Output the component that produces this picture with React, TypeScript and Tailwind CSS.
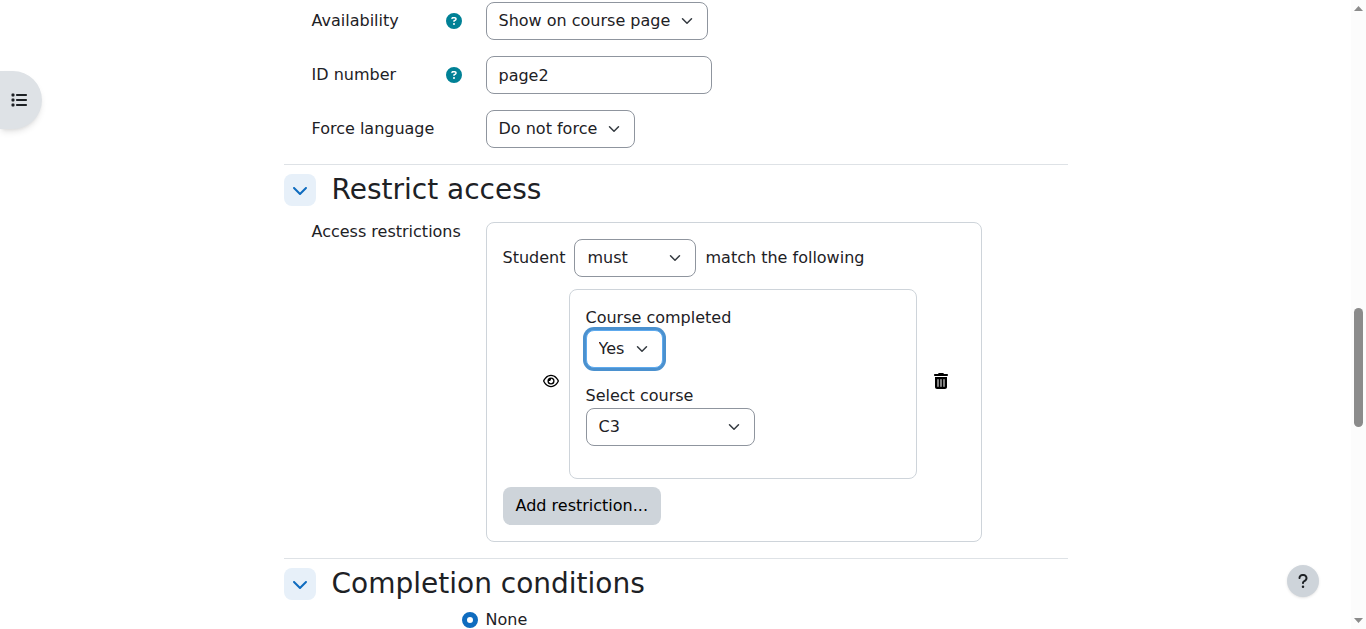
import { useState, type ReactNode, type SelectHTMLAttributes } from "react";
import {
  FaChevronDown,
  FaCircleQuestion,
  FaList,
  FaQuestion,
  FaRegEye,
  FaTrashCan,
} from "react-icons/fa6";

type SelectProps = SelectHTMLAttributes<HTMLSelectElement> & {
  options: string[];
  width: string;
  focused?: boolean;
};

function Select({ options, width, focused, ...rest }: SelectProps) {
  return (
    <span className={`relative inline-flex ${width}`}>
      <select
        {...rest}
        className={`h-[38px] w-full appearance-none rounded-lg border bg-white pr-9 pl-3 text-base text-[#1d2125] outline-none ${
          focused
            ? "border-[#5eaaee] ring-3 ring-[#4b91cf]"
            : "border-[#8f959e] focus:ring-3 focus:ring-[#4b91cf]"
        }`}
      >
        {options.map((o) => (
          <option key={o}>{o}</option>
        ))}
      </select>
      <svg
        viewBox="0 0 16 16"
        aria-hidden="true"
        className="pointer-events-none absolute top-[13px] right-[13px] h-3 w-4"
        fill="none"
        stroke="#343a40"
        strokeWidth="2"
        strokeLinecap="round"
        strokeLinejoin="round"
      >
        <path d="m2 5 6 6 6-6" />
      </svg>
    </span>
  );
}

function Row({
  label,
  htmlFor,
  help,
  children,
}: {
  label: string;
  htmlFor: string;
  help?: boolean;
  children: ReactNode;
}) {
  return (
    <div className="flex items-center pl-7">
      <div className="flex w-[174px] shrink-0 items-center justify-between pr-6">
        <label htmlFor={htmlFor}>{label}</label>
        {help && (
          <button type="button" aria-label={`Help with ${label}`} className="text-[#008196]">
            <FaCircleQuestion size={16} />
          </button>
        )}
      </div>
      {children}
    </div>
  );
}

function Section({ title, children }: { title: string; children: ReactNode }) {
  const [open, setOpen] = useState(true);
  return (
    <section className="mt-4 border-t border-[#dee2e6] pt-[9px]">
      <div className="flex h-8 items-center gap-4">
        <button
          type="button"
          aria-label={title}
          aria-expanded={open}
          onClick={() => setOpen(!open)}
          className="flex size-8 items-center justify-center rounded-lg bg-[#e7f0f9] text-[#0f6cbf]"
        >
          <FaChevronDown size={16} />
        </button>
        <h3 className="text-[28px] leading-8">{title}</h3>
      </div>
      {open && children}
    </section>
  );
}

function Restriction() {
  return (
    <div className="flex items-center">
      <button
        type="button"
        aria-label="Displayed if student does not meet this condition"
        className="flex w-[66px] shrink-0 justify-end pr-2.5 pb-1.5 text-black"
      >
        <FaRegEye size={16} />
      </button>
      <div className="flex flex-1 flex-col items-start gap-4 rounded-lg border border-[#ced4da] px-4 pt-4 pb-8">
        <div className="flex flex-col items-start">
          <label htmlFor="completed">Course completed</label>
          <Select id="completed" width="w-[77px]" options={["Yes", "No"]} focused />
        </div>
        <div className="flex flex-col items-start">
          <label htmlFor="course">Select course</label>
          <Select id="course" width="w-[169px]" options={["C3", "C1", "C2"]} />
        </div>
      </div>
      <button
        type="button"
        aria-label="Delete"
        className="flex w-12 shrink-0 justify-center pb-1.5 text-black"
      >
        <FaTrashCan size={16} />
      </button>
    </div>
  );
}

function Scrollbar() {
  return (
    <div
      aria-hidden="true"
      className="flex w-[15px] shrink-0 flex-col items-center justify-between bg-[#fcfcfc] py-1.5"
    >
      <svg width="9" height="5" viewBox="0 0 9 5" fill="#8b8b8b">
        <path d="M4.5 0 9 5H0z" />
      </svg>
      <div className="flex w-full flex-1 flex-col items-center">
        <div className="flex-[296]" />
        <div className="w-[9px] flex-[119] rounded-full bg-[#8b8b8b]" />
        <div className="flex-[190]" />
      </div>
      <svg width="9" height="5" viewBox="0 0 9 5" fill="#8b8b8b">
        <path d="M4.5 5 9 0H0z" />
      </svg>
    </div>
  );
}

export default function App() {
  return (
    <div className="flex h-screen overflow-hidden bg-white font-['DejaVu_Sans',sans-serif] text-base text-[#1d2125]">
      <button
        type="button"
        aria-label="Open course index"
        className="fixed top-[71px] left-0 flex h-[58px] w-[42px] items-center rounded-r-full bg-[#dee2e6] pl-[11px] shadow-md"
      >
        <FaList size={16} />
      </button>

      <main className="flex-1 overflow-hidden">
        <form className="mx-auto max-w-[784px] pt-0.5">
          <div className="flex flex-col gap-4">
            <Row label="Availability" htmlFor="availability" help>
              <Select
                id="availability"
                width="w-[222px]"
                options={["Show on course page", "Hide on course page"]}
              />
            </Row>
            <Row label="ID number" htmlFor="idnumber" help>
              <input
                id="idnumber"
                type="text"
                defaultValue="page2"
                className="h-[38px] w-[226px] rounded-lg border border-[#8f959e] px-3 outline-none focus:ring-3 focus:ring-[#4b91cf]"
              />
            </Row>
            <Row label="Force language" htmlFor="language">
              <Select id="language" width="w-[149px]" options={["Do not force", "English"]} />
            </Row>
          </div>

          <Section title="Restrict access">
            <div className="mt-4 flex items-start pl-7">
              <div className="w-[174px] shrink-0 whitespace-nowrap leading-5">Access restrictions</div>
              <div className="w-full max-w-[496px] rounded-lg border border-[#ced4da] p-4">
                <div className="mb-3 flex items-center gap-[9px]">
                  <label htmlFor="must">Student</label>
                  <Select id="must" width="w-[122px]" options={["must", "must not"]} />
                  <span>match the following</span>
                </div>
                <Restriction />
                <button
                  type="button"
                  className="mt-2 h-[38px] rounded-lg bg-[#ced4da] px-[13px] text-black"
                >
                  Add restriction...
                </button>
              </div>
            </div>
          </Section>

          <Section title="Completion conditions">
            <label className="mt-2 ml-[178px] flex items-center gap-2">
              <input
                type="radio"
                name="completion"
                defaultChecked
                className="size-4 appearance-none rounded-full border border-[#8f959e] bg-white checked:border-5 checked:border-[#0f6cbf]"
              />
              None
            </label>
          </Section>
        </form>
      </main>

      <Scrollbar />

      <button
        type="button"
        aria-label="Show footer"
        className="fixed right-[47px] bottom-8 flex size-8 items-center justify-center rounded-full bg-[#ced4da] shadow-sm"
      >
        <FaQuestion size={16} />
      </button>
    </div>
  );
}
